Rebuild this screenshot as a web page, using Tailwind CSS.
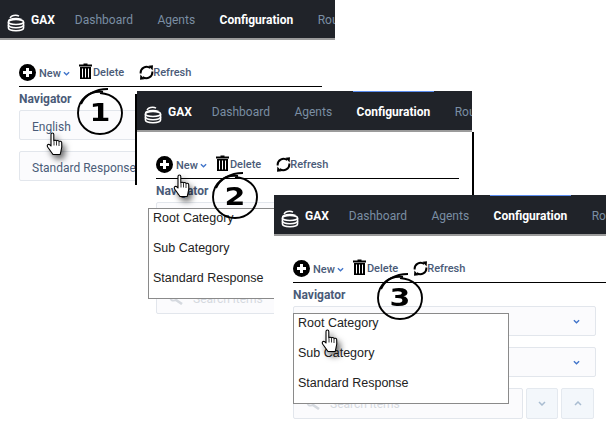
<!DOCTYPE html>
<html lang="en">
<head>
  <meta charset="UTF-8">
  <title>GAX Navigator steps</title>
  <script src="https://cdn.jsdelivr.net/npm/@tailwindcss/browser@4"></script>
</head>
<body class="bg-white">
  <svg class="hidden">
    <symbol id="logo" viewBox="0 0 18 18">
      <g fill="none" stroke="#fff" stroke-width="1.5">
        <path d="M12 2.2C9 .4 3.600 1.600 3.200 4.200"/>
        <path d="M1.500 7.500c0-1.800 3.400-3 7.500-3 2 0 4 .4 5.500 1"/>
        <ellipse cx="9" cy="8" rx="7.600" ry="2.500"/>
        <path d="M1.400 8v3c0 1.500 3.400 2.700 7.600 2.700s7.600-1.200 7.600-2.700V8"/>
        <path d="M1.400 11v3c0 1.500 3.400 2.700 7.600 2.700s7.600-1.200 7.600-2.700v-3"/>
      </g>
    </symbol>
    <symbol id="plus" viewBox="0 0 17 17">
      <circle cx="8.500" cy="8.500" r="8.500" fill="#000"/>
      <path d="M8.500 4v9M4 8.500h9" stroke="#fff" stroke-width="3"/>
    </symbol>
    <symbol id="trash" viewBox="0 0 13 16">
      <path d="M4.500 1.500V.5h4v1H13v2H0v-2z" fill="#000"/>
      <path d="M1 4h11v12H1z" fill="#000"/>
      <path d="M3.500 5.500v9M6.500 5.500v9M9.500 5.500v9" stroke="#fff" stroke-width="1"/>
    </symbol>
    <symbol id="refresh" viewBox="0 0 15 15">
      <path d="M1.700 8.500A6 6 0 0 1 11.300 3" fill="none" stroke="#000" stroke-width="2"/>
      <path d="M13.300 6.500A6 6 0 0 1 3.700 12" fill="none" stroke="#000" stroke-width="2"/>
      <path d="M9.500 .8L14 .3l-.4 5.200zM5.500 14.200L1 14.700l.4-5.200z" fill="#000"/>
    </symbol>
    <symbol id="hand" viewBox="0 0 18 24">
      <path d="M5 13V2.500C5 1.500 5.700 1 6.400 1s1.400.5 1.400 1.500V9c0-1 2.500-1.200 2.700.2 0-1 2.400-1 2.600.5.200-.8 2.400-.7 2.600.8.300 3 .3 5.500-.7 8.500l-.8 3.500H7L2 15.500c-1-1.500-1-2.500 0-3 1-.4 2 .2 3 1.500z" fill="#fff" stroke="#000" stroke-width="1.100" stroke-linejoin="round"/>
      <path d="M8 9.500v4M10.500 9.500v4M13 10v4" stroke="#000" stroke-width=".8"/>
    </symbol>
    <symbol id="ring" viewBox="0 0 50 50">
      <path d="M28 5C15 3 3 12 3 26c0 12 10 21 22 21s22-9 22-21C47 15 38 7 25 6" fill="none" stroke="#000" stroke-width="1.900"/>
      <path d="M6 17C10 8 20 2 33 2" fill="none" stroke="#000" stroke-width="1.900"/>
    </symbol>
    <symbol id="chev" viewBox="0 0 8 5">
      <path d="M1 1l3 3 3-3" fill="none" stroke="currentColor" stroke-width="1.500"/>
    </symbol>
    <symbol id="search" viewBox="0 0 14 12">
      <circle cx="4.500" cy="4.500" r="3.200" fill="none" stroke="#d5d9df" stroke-width="1.800"/>
      <path d="M7 7l6 4" stroke="#d5d9df" stroke-width="2.600"/>
    </symbol>
  </svg>

  <div class="relative w-[606px] h-[425px] overflow-hidden font-['Roboto',sans-serif]">

    <!-- Step 1 -->
    <section class="absolute left-0 top-[-1px] w-[335px] h-[200px] bg-white">
      <nav class="h-[41px] pt-[2px] bg-[#202329] border-b-2 border-[#9b9b9b] flex items-center overflow-hidden whitespace-nowrap text-xs text-[#7a8ea3]">
        <svg class="ml-[7px] mt-[7px] w-[18px] h-[18px] shrink-0"><use href="#logo"/></svg>
        <span class="ml-[6px] mr-[20px] text-white font-bold">GAX</span>
        <div class="flex gap-[24.500px]">
          <span>Dashboard</span>
          <span>Agents</span>
          <span class="relative text-white font-bold">Configuration<i class="absolute -left-1 -right-1 top-[-15px] h-[3px] bg-[#5b8def]"></i></span>
          <span>Routing</span>
        </div>
      </nav>
      <div class="ml-[19px] w-[303px] h-[47px] pb-[5px] border-b border-black flex items-end text-[11px] font-medium text-[#4a5b78]">
        <svg class="w-[17px] h-[17px]"><use href="#plus"/></svg>
        <span class="ml-[3px] mb-[-1px]">New</span>
        <svg class="ml-[2px] mb-[5px] w-[7px] h-[5px] text-[#3f73c9]"><use href="#chev"/></svg>
        <svg class="ml-[9px] mb-[2px] w-[13px] h-[16px]"><use href="#trash"/></svg>
        <span class="ml-[1px]">Delete</span>
        <svg class="ml-[15px] mb-[1px] w-[15px] h-[15px]"><use href="#refresh"/></svg>
        <span class="ml-[-1px]">Refresh</span>
      </div>
      <div class="ml-[19px] h-[23px] flex items-center text-xs font-bold text-[#4a5b78]">Navigator</div>
      <div class="ml-[19px] w-[303px] flex flex-col gap-[11px] text-xs text-[#4a5b78]">
        <div class="h-[30px] pl-[12px] pt-[3px] flex items-center bg-[#fbfbfd] border border-[#e2e6ec] rounded-[2px]">English</div>
        <div class="h-[30px] pl-[12px] pt-[3px] flex items-center bg-[#fbfbfd] border border-[#e2e6ec] rounded-[2px]">Standard Response</div>
      </div>
      <svg class="absolute left-[46px] top-[133px] w-[18px] h-[24px] drop-shadow-[3px_4px_3px_rgba(0,0,0,0.6)]"><use href="#hand"/></svg>
      <svg class="absolute left-[75px] top-[88px] w-[50px] h-[50px]"><use href="#ring"/></svg>
      <span class="absolute left-[75px] top-[89px] w-[50px] h-[50px] flex items-center justify-center font-['DejaVu_Sans',sans-serif] font-bold text-[24px] text-black scale-x-125">1</span>
    </section>

    <!-- Step 2 -->
    <section class="absolute left-[137px] top-[91px] w-[335px] h-[232px] bg-white">
      <i class="absolute left-[-2px] top-[3px] w-[2px] h-[91px] bg-black"></i>
      <i class="absolute right-[-2px] top-[41px] w-[2px] h-[63px] bg-black"></i>
      <nav class="h-[41px] pt-[2px] bg-[#202329] border-b-2 border-[#9b9b9b] flex items-center overflow-hidden whitespace-nowrap text-xs text-[#7a8ea3]">
        <svg class="ml-[7px] mt-[7px] w-[18px] h-[18px] shrink-0"><use href="#logo"/></svg>
        <span class="ml-[6px] mr-[20px] text-white font-bold">GAX</span>
        <div class="flex gap-[24.500px]">
          <span>Dashboard</span>
          <span>Agents</span>
          <span class="relative text-white font-bold">Configuration<i class="absolute -left-1 -right-1 top-[-15px] h-[3px] bg-[#5b8def]"></i></span>
          <span>Routing</span>
        </div>
      </nav>
      <div class="ml-[19px] w-[303px] h-[47px] pb-[5px] border-b border-black flex items-end text-[11px] font-medium text-[#4a5b78]">
        <svg class="w-[17px] h-[17px]"><use href="#plus"/></svg>
        <span class="ml-[3px] mb-[-1px]">New</span>
        <svg class="ml-[2px] mb-[5px] w-[7px] h-[5px] text-[#3f73c9]"><use href="#chev"/></svg>
        <svg class="ml-[9px] mb-[2px] w-[13px] h-[16px]"><use href="#trash"/></svg>
        <span class="ml-[1px]">Delete</span>
        <svg class="ml-[15px] mb-[1px] w-[15px] h-[15px]"><use href="#refresh"/></svg>
        <span class="ml-[-1px]">Refresh</span>
      </div>
      <div class="ml-[19px] h-[23px] flex items-center text-xs font-bold text-[#4a5b78]">Navigator</div>
      <div class="ml-[19px] w-[303px] flex flex-col gap-[11px]">
        <div class="h-[30px] bg-[#fbfbfd] border border-[#e2e6ec] rounded-[2px]"></div>
        <div class="h-[30px] bg-[#fbfbfd] border border-[#e2e6ec] rounded-[2px]"></div>
        <div class="h-[30px] pl-[12px] flex items-center gap-[10px] bg-[#fbfbfd] border border-[#e2e6ec] rounded-[2px] text-xs text-[#d5d9df]"><svg class="w-[14px] h-[12px]"><use href="#search"/></svg>Search items</div>
      </div>
      <div class="absolute left-[11px] top-[117px] w-[217px] h-[91px] pl-[4px] bg-white border border-[#8a8a8a] font-['Liberation_Sans',sans-serif] text-[12.500px] text-[#222]">
        <div class="h-[30px] leading-[18px]">Root Category</div>
        <div class="h-[30px] leading-[18px]">Sub Category</div>
        <div class="h-[30px] leading-[18px]">Standard Response</div>
      </div>
      <svg class="absolute left-[36px] top-[83px] w-[18px] h-[24px] drop-shadow-[3px_4px_3px_rgba(0,0,0,0.6)]"><use href="#hand"/></svg>
      <svg class="absolute left-[73px] top-[80px] w-[50px] h-[50px]"><use href="#ring"/></svg>
      <span class="absolute left-[73px] top-[81px] w-[50px] h-[50px] flex items-center justify-center font-['DejaVu_Sans',sans-serif] font-bold text-[24px] text-black scale-x-125">2</span>
    </section>

    <!-- Step 3 -->
    <section class="absolute left-[274px] top-[195px] w-[332px] h-[230px] bg-white">
      <nav class="h-[41px] pt-[2px] bg-[#202329] border-b-2 border-[#9b9b9b] flex items-center overflow-hidden whitespace-nowrap text-xs text-[#7a8ea3]">
        <svg class="ml-[7px] mt-[7px] w-[18px] h-[18px] shrink-0"><use href="#logo"/></svg>
        <span class="ml-[6px] mr-[20px] text-white font-bold">GAX</span>
        <div class="flex gap-[24.500px]">
          <span>Dashboard</span>
          <span>Agents</span>
          <span class="relative text-white font-bold">Configuration<i class="absolute -left-1 -right-1 top-[-15px] h-[3px] bg-[#5b8def]"></i></span>
          <span>Routing</span>
        </div>
      </nav>
      <div class="ml-[19px] w-[313px] h-[47px] pb-[5px] border-b border-black flex items-end text-[11px] font-medium text-[#4a5b78]">
        <svg class="w-[17px] h-[17px]"><use href="#plus"/></svg>
        <span class="ml-[3px] mb-[-1px]">New</span>
        <svg class="ml-[2px] mb-[5px] w-[7px] h-[5px] text-[#3f73c9]"><use href="#chev"/></svg>
        <svg class="ml-[9px] mb-[2px] w-[13px] h-[16px]"><use href="#trash"/></svg>
        <span class="ml-[1px]">Delete</span>
        <svg class="ml-[15px] mb-[1px] w-[15px] h-[15px]"><use href="#refresh"/></svg>
        <span class="ml-[-1px]">Refresh</span>
      </div>
      <div class="ml-[19px] h-[23px] flex items-center text-xs font-bold text-[#4a5b78]">Navigator</div>
      <div class="ml-[19px] w-[303px] flex flex-col gap-[11px]">
        <div class="h-[30px] pr-[15px] flex items-center justify-end bg-[#fbfbfd] border border-[#e2e6ec] rounded-[2px]"><svg class="w-[7px] h-[5px] text-[#3f73c9]"><use href="#chev"/></svg></div>
        <div class="h-[30px] pr-[15px] flex items-center justify-end bg-[#fbfbfd] border border-[#e2e6ec] rounded-[2px]"><svg class="w-[7px] h-[5px] text-[#3f73c9]"><use href="#chev"/></svg></div>
        <div class="flex h-[31px] gap-[3px] text-[#a9bdd1]">
          <div class="w-[230px] pl-[12px] flex items-center gap-[10px] bg-[#fbfbfd] border border-[#e2e6ec] rounded-[2px] text-xs text-[#d5d9df]"><svg class="w-[14px] h-[12px]"><use href="#search"/></svg>Search items</div>
          <div class="w-[32px] flex items-center justify-center bg-[#f3f7fb] border border-[#e4e9ef] rounded-[2px]"><svg class="w-[8px] h-[5px]"><use href="#chev"/></svg></div>
          <div class="w-[33px] flex items-center justify-center bg-[#f3f7fb] border border-[#e4e9ef] rounded-[2px]"><svg class="w-[8px] h-[5px] rotate-180"><use href="#chev"/></svg></div>
        </div>
      </div>
      <div class="absolute left-[19px] top-[118px] w-[216px] h-[91px] pl-[4px] bg-white border border-[#8a8a8a] font-['Liberation_Sans',sans-serif] text-[12.500px] text-[#222]">
        <div class="h-[30px] leading-[18px]">Root Category</div>
        <div class="h-[30px] leading-[18px]">Sub Category</div>
        <div class="h-[30px] leading-[18px]">Standard Response</div>
      </div>
      <svg class="absolute left-[47px] top-[134px] w-[18px] h-[24px] drop-shadow-[3px_4px_3px_rgba(0,0,0,0.6)]"><use href="#hand"/></svg>
      <svg class="absolute left-[101px] top-[77px] w-[50px] h-[50px]"><use href="#ring"/></svg>
      <span class="absolute left-[101px] top-[78px] w-[50px] h-[50px] flex items-center justify-center font-['DejaVu_Sans',sans-serif] font-bold text-[24px] text-black scale-x-125">3</span>
    </section>
  </div>
</body>
</html>
